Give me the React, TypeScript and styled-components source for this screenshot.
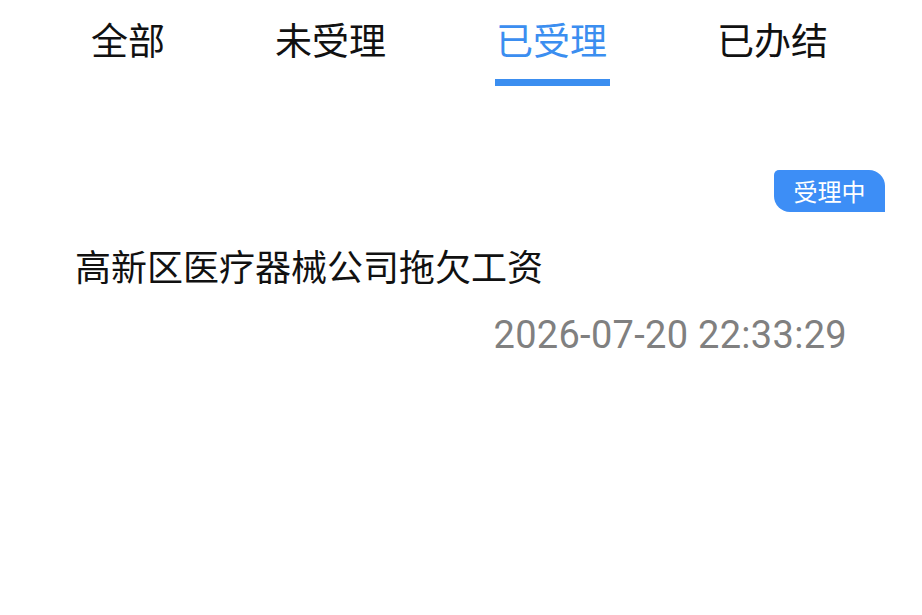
import React from "react";
import styled, { createGlobalStyle } from "styled-components";

const Global = createGlobalStyle`
  html, body { margin: 0; padding: 0; background: #ffffff; }
  body { font-family: "Noto Sans CJK SC", "Noto Sans", sans-serif; }
`;

const Page = styled.div`
  width: 922px;
  min-height: 615px;
  background: #ffffff;
`;

const TabBar = styled.div`
  display: flex;
  align-items: flex-start;
  gap: 110px;
  padding-left: 91px;
  padding-top: 21px;
  height: 65px;
`;

const Tab = styled.div<{ $active?: boolean }>`
  position: relative;
  font-size: 37px;
  line-height: 37px;
  color: ${(p) => (p.$active ? "#3b8ef0" : "#111111")};
  &::after {
    content: "";
    display: ${(p) => (p.$active ? "block" : "none")};
    height: 7px;
    margin-top: 21px;
    margin-left: -1px;
    width: calc(100% + 4px);
    background: #3b8ef0;
  }
`;

const Card = styled.div`
  display: flex;
  flex-direction: column;
  padding-top: 84px;
`;

const BadgeRow = styled.div`
  display: flex;
  justify-content: flex-end;
  padding-right: 37px;
`;

const Badge = styled.div`
  background: #3d8ef6;
  color: #ffffff;
  font-size: 24px;
  line-height: 42px;
  height: 42px;
  padding: 0 19.5px;
  border-radius: 5px 16px 0 16px;
`;

const Title = styled.div`
  margin-top: 35px;
  padding-left: 75px;
  font-size: 36px;
  line-height: 36px;
  color: #111111;
`;

const DateRow = styled.div`
  margin-top: 33px;
  padding-right: 75px;
  text-align: right;
  font-family: Roboto, "Noto Sans", sans-serif;
  font-size: 38px;
  line-height: 38px;
  letter-spacing: 0.3px;
  color: #808080;
`;

const tabs = ["全部", "未受理", "已受理", "已办结"];

export default function App() {
  return (
    <Page>
      <Global />
      <TabBar>
        {tabs.map((t, i) => (
          <Tab key={t} $active={i === 2}>
            {t}
          </Tab>
        ))}
      </TabBar>
      <Card>
        <BadgeRow>
          <Badge>受理中</Badge>
        </BadgeRow>
        <Title>高新区医疗器械公司拖欠工资</Title>
        <DateRow>2026-07-20 22:33:29</DateRow>
      </Card>
    </Page>
  );
}
